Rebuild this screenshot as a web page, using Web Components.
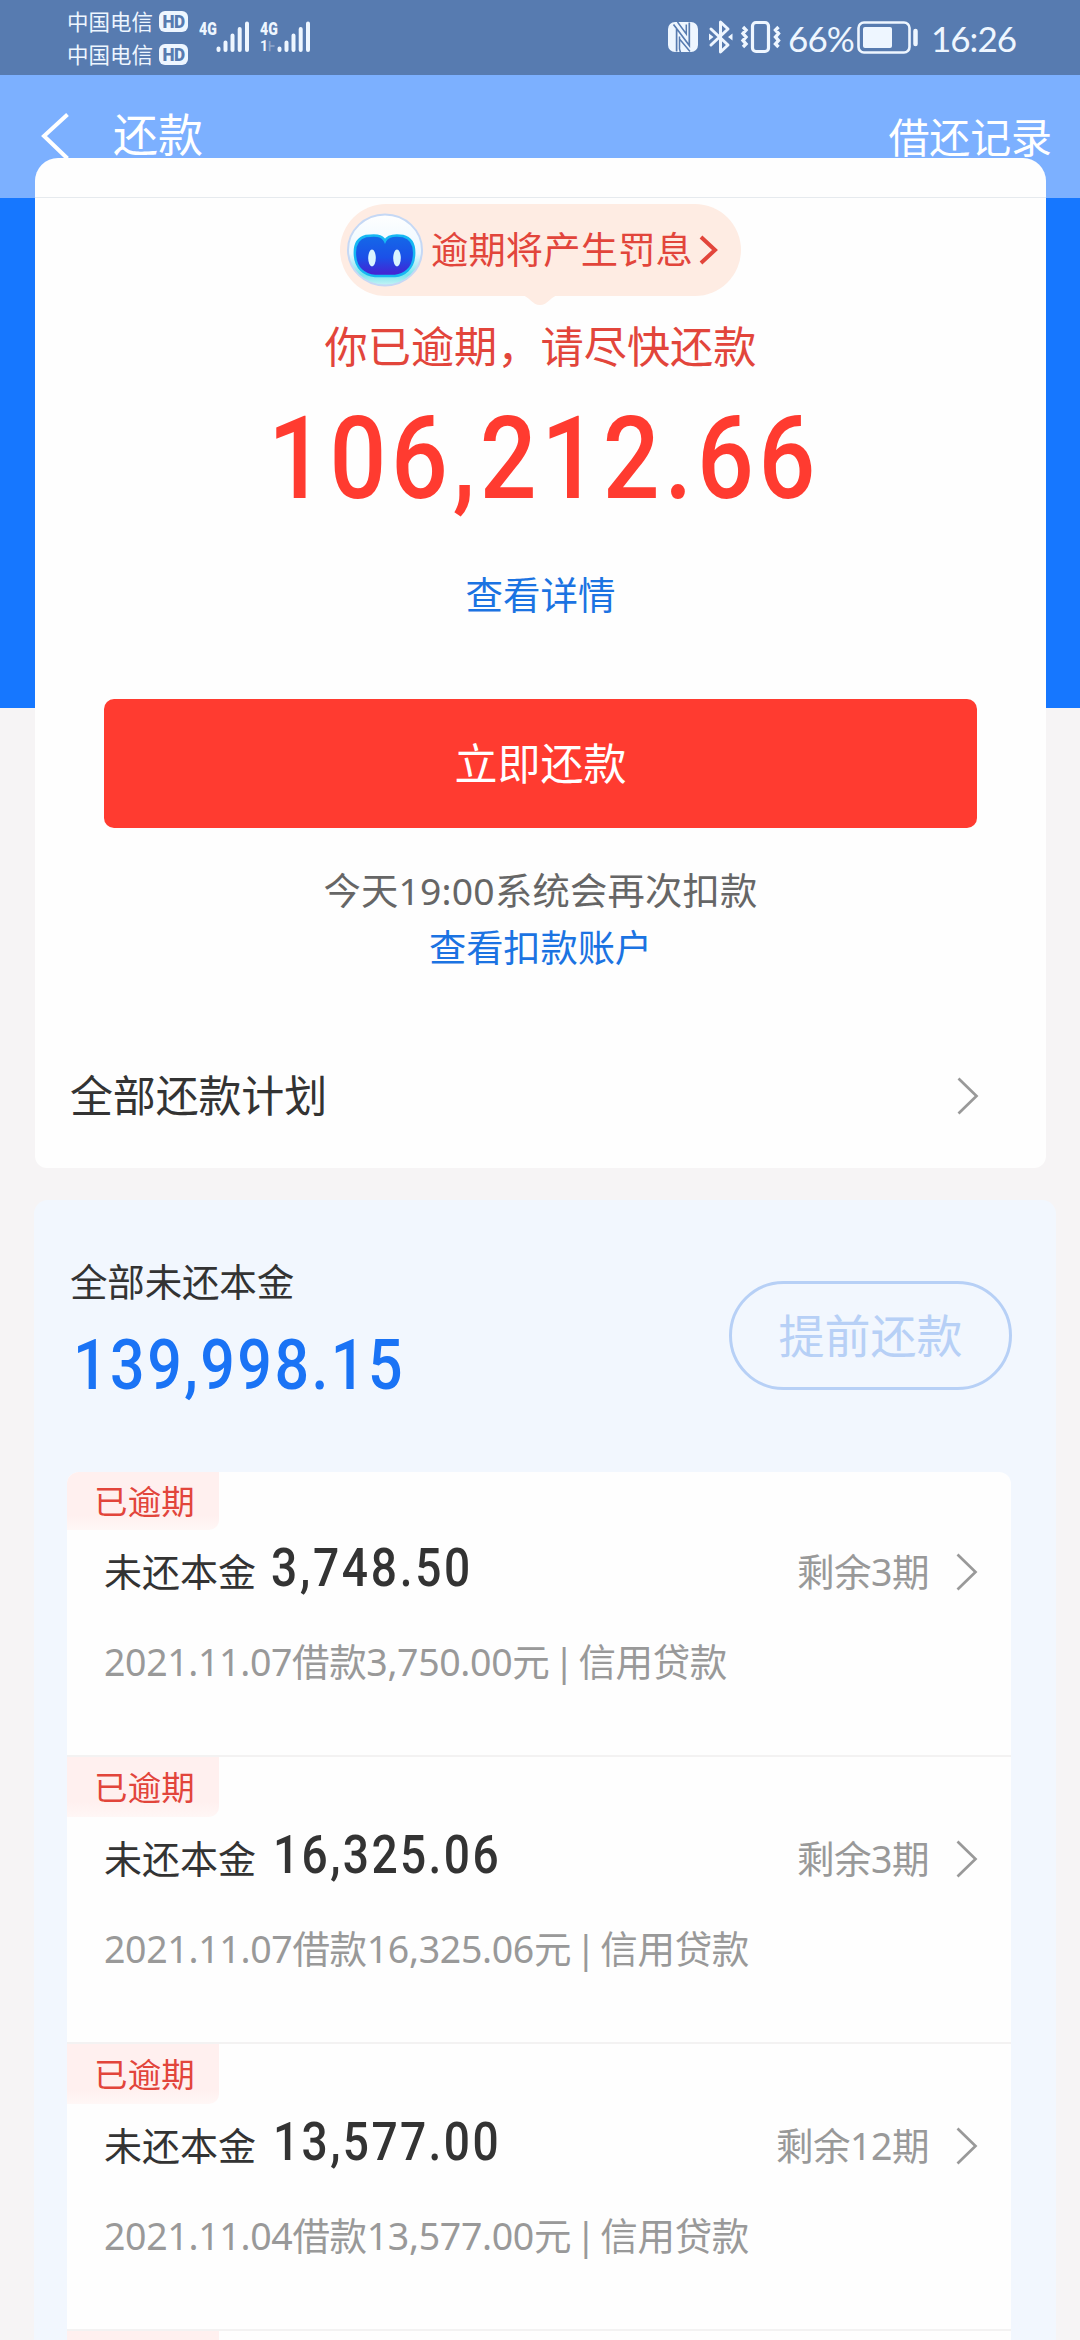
<!DOCTYPE html>
<html lang="zh-CN">
<head>
<meta charset="utf-8">
<title>还款</title>
<style>
html,body{margin:0;padding:0}
body{width:1080px;height:2340px;overflow:hidden;background:#f6f4f5;font-family:"Noto Sans","Noto Sans CJK SC",sans-serif;color:#333}
</style>
</head>
<body>
<repay-page></repay-page>
<script>
const define=(name,html,init)=>{
  const t=document.createElement('template');
  t.innerHTML=html;
  customElements.define(name,class extends HTMLElement{
    connectedCallback(){
      if(this.shadowRoot)return;
      this.attachShadow({mode:'open'}).append(t.content.cloneNode(true));
      if(init)init(this,this.shadowRoot);
    }
  });
};

/* One line of text, tracked so that its advance equals the w attribute.
   With the num attribute it is drawn in condensed figures. */
define('fit-text',`<style>
:host{display:block;white-space:pre;flex:none;word-spacing:-5px}
span{display:inline-block;transform-origin:0 50%}
:host([num]){font-family:Roboto,sans-serif;font-weight:500}
:host([num]) span{transform:scaleX(.87)}
</style><span></span>`,(el,r)=>{
  const s=r.querySelector('span');
  s.textContent=el.getAttribute('t');
  const h=el.getAttribute('h');
  el.style.fontSize=el.getAttribute('s')+'px';
  el.style.height=el.style.lineHeight=h+'px';
  const w=+el.getAttribute('w');
  el.style.width=w+'px';
  const k=el.hasAttribute('num')?.87:1;
  s.style.letterSpacing=(w-s.getBoundingClientRect().width)/k/s.textContent.length+'px';
});

define('chevron-right',`<style>:host{display:block;flex:none;width:24px;height:40px}svg{display:block}</style>
<svg width="24" height="40" viewBox="0 0 24 40"><path d="M3.500 2.500L21.500 20L3.500 37.500" fill="none" stroke="#999" stroke-width="2.7"/></svg>`);

define('signal-bars',`<style>:host{display:block}svg{display:block}</style>
<svg width="34" height="32" viewBox="0 0 34 32" stroke="#eef6ff" stroke-width="4" stroke-linecap="round"><path d="M2.5 27.5V29M9.5 21.5V29M16.5 14.5V29M23.7 8V29M31 2.5V29"/></svg>`);

define('status-bar',`<style>
:host{display:flex;height:75px;background:#577bb0;color:#eef6ff;box-sizing:border-box;padding-left:67px;position:relative}
.car{display:flex;flex-direction:column;padding-top:5px}
.car>div{display:flex;align-items:center;height:33px;gap:6px}
.hd{width:29px;height:21px;border-radius:6px;background:#eef6ff;color:#577bb0;font:700 19px/21px Roboto,sans-serif;text-align:center;letter-spacing:-.5px}
.hd b{display:block;transform:scaleX(.9)}
.sig{display:flex;margin-left:11px;padding-top:21px}
.net{width:17px;font:700 18.500px/17px Roboto,sans-serif;}
.net b{display:block;transform:scaleX(.76);transform-origin:0 0}
.net i{display:block;font:700 14px/14px Roboto,sans-serif;margin-top:1px;white-space:pre}
.net i em{opacity:.35;font-style:normal}
.s2{margin-left:10px}
.right{margin-left:auto;display:flex;align-items:flex-start;padding-right:64px;padding-top:14px}
.right svg{display:block;margin-top:4px}
</style>
<div class="car"><div><fit-text t="中国电信" s="21.5" h="33" w="86"></fit-text><div class="hd"><b>HD</b></div></div><div><fit-text t="中国电信" s="21.5" h="33" w="86"></fit-text><div class="hd"><b>HD</b></div></div></div>
<div class="sig"><div class="net"><b>4G</b></div><signal-bars></signal-bars></div>
<div class="sig s2"><div class="net"><b>4G</b><i>1<em>⊦</em></i></div><signal-bars></signal-bars></div>
<div class="right">
<svg width="120" height="40" viewBox="0 0 120 40" fill="none" stroke="#eef6ff">
<rect x="0" y="4" width="30" height="30" rx="7" fill="#eef6ff" stroke="none"/>
<path d="M8.300 4V30M8.300 9.500L20.500 26.500V10L24 34M21.800 34V12" stroke="#577bb0" stroke-width="0"/>
<path d="M8.600 33.500V10.500L21.300 27.500V19M21.300 4.500V27.500M8.600 10.500L5.500 6.500" stroke="#577bb0" stroke-width="1.700"/>
<path d="M12.500 34.500L11.500 31V18.500M9.500 4L18.300 16V6.500M11.500 21L22 33.500" stroke="#577bb0" stroke-width="1.500"/>
<path d="M43 11L60 27L52.500 34V4L60 11L43 27" stroke-width="3" stroke-linejoin="round" stroke-linecap="round"/>
<path d="M41 15.500l4.500 3.500-4.500 3.500zM64.500 15.500l-4.500 3.500 4.500 3.500z" fill="#eef6ff" stroke="none"/>
<rect x="84.500" y="4.500" width="16" height="29" rx="3.500" stroke-width="3.200"/>
<path d="M75 9l3 3-3 3.500 3 3.500-3 3.500 3 3.500-3 3M110.500 9l-3 3 3 3.500-3 3.500 3 3.500-3 3.500 3 3" stroke-width="3.400"/>
</svg>
<fit-text t="66%" s="35" h="48" w="66" style="font-family:Lato,sans-serif;margin-left:0"></fit-text>
<svg style="margin-left:3px" width="62" height="40" viewBox="0 0 62 40" fill="none" stroke="#eef6ff"><rect x="1.500" y="4.500" width="51" height="30" rx="5.500" stroke-width="2.600"/><rect x="6" y="9" width="29" height="21" rx="2" fill="#eef6ff" stroke="none"/><path d="M58.500 13V26" stroke-width="4.500" stroke-linecap="round"/></svg>
<fit-text t="16:26" s="35" h="48" w="85" style="font-family:Lato,sans-serif;margin-left:12px"></fit-text>
</div>`);

define('nav-header',`<style>
:host{display:flex;height:122px;background:#7cb0ff;color:#fff;padding-left:40px;padding-right:28px;justify-content:space-between;border-bottom:1px solid #7cb0ff}
.l{display:flex}svg{display:block;margin-top:37px}
</style>
<div class="l"><svg width="30" height="48" viewBox="0 0 30 48"><path d="M27.500 2.500L4 24L27.500 46.500" fill="none" stroke="#fff" stroke-width="4"/></svg>
<fit-text t="还款" s="45" h="60" w="90" style="margin:30px 0 0 43px"></fit-text></div>
<fit-text t="借还记录" s="41" h="60" w="163.500" style="margin-top:32px"></fit-text>`);

define('tip-bubble',`<style>
:host{display:flex;box-sizing:border-box;position:relative;width:401px;height:92px;border-radius:46px;background:#feece3;align-items:center;padding-left:6px;color:#e2453b}
.tail{position:absolute;left:182px;top:91px}
svg{display:block;flex:none}
</style>
<svg width="78" height="74" viewBox="0 0 78 74"><defs>
<linearGradient id="a" x1="0" y1="0" x2="0" y2="1"><stop offset="0" stop-color="#fff"/><stop offset=".55" stop-color="#eaf7ff"/><stop offset=".85" stop-color="#7ce6ee"/><stop offset="1" stop-color="#c8f3f5"/></linearGradient>
<linearGradient id="b" x1="0" y1="0" x2="0" y2="1"><stop offset="0" stop-color="#1469e8"/><stop offset=".55" stop-color="#1b50e8"/><stop offset="1" stop-color="#4a1fd0"/></linearGradient></defs>
<ellipse cx="39" cy="37" rx="37" ry="35.500" fill="url(#a)" stroke="#c5d8f5" stroke-width="2"/>
<path d="M39 28C42 21.500 50 22 57 23C65 25 69 32 68 43C67 56 58 62 49 63H29C18 62 10 55 9 43C8 32 12 25 20 23C28 22 36 21.500 39 28Z" fill="url(#b)" stroke="#16b8f2" stroke-width="2.500"/>
<ellipse cx="26" cy="45" rx="3.800" ry="8.500" fill="#d9f5ff"/><ellipse cx="51" cy="45" rx="3.800" ry="8.500" fill="#d9f5ff"/></svg>
<fit-text t="逾期将产生罚息" s="37.300" h="50" w="262" style="margin-left:7px"></fit-text>
<svg width="24" height="32" viewBox="0 0 24 32" style="margin-left:4px"><path d="M4 3L18 16L4 29" fill="none" stroke="#e2453b" stroke-width="4"/></svg>
<svg class="tail" width="36" height="11" viewBox="0 0 36 11"><path d="M0 0H36C28 2 26 10 18 10S8 2 0 0Z" fill="#feece3"/></svg>`);

define('repay-card',`<style>
:host{display:flex;flex-direction:column;align-items:center;width:1011px;height:1010px;margin:-40px 0 0 35px;background:#fefefe;border-radius:23px 23px 12px 12px;position:relative;color:#1b73e2}
.top{width:100%;height:39px;border-bottom:1px solid #e6eaee;margin-bottom:6px;flex:none}
.red{color:#e2453b}
.btn{width:873px;height:129px;border-radius:10px;background:#ff3b30;color:#fff;display:flex;align-items:center;justify-content:center;margin:79px 0 38px;flex:none}
.plan{display:flex;align-items:center;justify-content:space-between;align-self:stretch;height:144px;margin-top:51px;padding:0 67px 0 35px;color:#333}
</style>
<div class="top"></div>
<tip-bubble></tip-bubble>
<fit-text class="red" t="你已逾期，请尽快还款" s="43.200" h="60" w="432" style="margin-top:21px"></fit-text>
<fit-text num t="106,212.66" s="115" h="100" w="552" style="margin-top:32px;padding-left:6px;color:#ff3b30"></fit-text>
<fit-text t="查看详情" s="37.500" h="50" w="150" style="margin-top:61px"></fit-text>
<div class="btn"><fit-text t="立即还款" s="43" h="60" w="172"></fit-text></div>
<fit-text t="今天19:00系统会再次扣款" s="37.300" h="50" w="434" style="color:#666"></fit-text>
<fit-text t="查看扣款账户" s="37.300" h="50" w="223" style="margin-top:7px"></fit-text>
<div class="plan"><fit-text t="全部还款计划" s="43" h="60" w="257"></fit-text><chevron-right></chevron-right></div>`);

define('loan-row',`<style>
:host{display:flex;flex-direction:column;height:287px;box-sizing:border-box;border-top:2px solid #f3f2f2;background:#fefefe}
:host([first]){height:283px;border-top:0}
.badge{width:152px;height:60px;background:linear-gradient(#fff0ef 75%,#fff7f6);border-radius:0 0 10px 0;color:#e2453b;padding-left:27px;display:flex;align-items:center;box-sizing:border-box;margin-bottom:11px;flex:none}
:host([first]) .badge{height:58px}
.main{display:flex;height:50px;padding:0 33px 0 37px}
.rest{margin:11px 25px 0 auto;color:#999}
.sub{margin:46px 0 0 37px;color:#999}
</style>
<div class="badge"><fit-text t="已逾期" s="33.500" h="50" w="101"></fit-text></div>
<div class="main"></div><div class="sub"></div>`,(el,r)=>{
  const a=n=>el.getAttribute(n);
  r.querySelector('.main').innerHTML=
   `<fit-text t="未还本金" s="38" h="50" w="152" style="margin-top:5px"></fit-text>
    <fit-text num t="${a('amount')}" s="53" h="50" w="${a('aw')}" style="margin-top:2px;margin-left:${a('ax')}px"></fit-text>
    <fit-text class="rest" t="${a('rest')}" s="37.500" h="50" w="${a('rw')}" style="margin-top:6px"></fit-text>
    <chevron-right style="margin-top:11px"></chevron-right>`;
  r.querySelector('.sub').innerHTML=`<fit-text t="${a('detail')}" s="37.500" h="50" w="${a('dw')}"></fit-text>`;
});

define('loan-panel',`<style>
:host{display:block;width:1022px;height:1140px;margin:32px 0 0 34px;background:#f2f7fe;border-radius:14px 14px 0 0;overflow:hidden}
.sum{display:flex;justify-content:space-between;height:272px;padding:0 44px 0 36px;box-sizing:border-box}
.left{padding-top:57px}
.btn{box-sizing:border-box;width:283px;height:109px;border:3px solid #b7d0f6;border-radius:55px;margin-top:81px;display:flex;align-items:center;justify-content:center;color:#b7d0f6}
.list{width:944px;margin-left:33px;border-radius:12px 12px 0 0;overflow:hidden}
</style>
<div class="sum"><div class="left"><fit-text t="全部未还本金" s="37.500" h="50" w="224"></fit-text>
<fit-text num t="139,998.15" s="70" h="60" w="332" style="margin:28px 0 0 3px;color:#1a73f5"></fit-text></div>
<div class="btn"><fit-text t="提前还款" s="46" h="60" w="184" style="margin-top:-2px"></fit-text></div></div>
<div class="list">
<loan-row first amount="3,748.50" ax="15" aw="202" rest="剩余3期" rw="132" detail="2021.11.07借款3,750.00元 | 信用贷款" dw="623"></loan-row>
<loan-row amount="16,325.06" ax="17" aw="228" rest="剩余3期" rw="132" detail="2021.11.07借款16,325.06元 | 信用贷款" dw="645"></loan-row>
<loan-row amount="13,577.00" ax="17" aw="228" rest="剩余12期" rw="153" detail="2021.11.04借款13,577.00元 | 信用贷款" dw="645"></loan-row>
<div style="height:11px;background:linear-gradient(90deg,#fff0ef 152px,#fefefe 152px);border-top:2px solid #f3f2f2"></div>
</div>`);

define('repay-page',`<style>
:host{display:block;width:1080px;height:2340px;overflow:hidden;background:linear-gradient(#1677ff 708px,#f6f4f5 708px)}
</style>
<status-bar></status-bar><nav-header></nav-header><repay-card></repay-card><loan-panel></loan-panel>`);
</script>
</body>
</html>
